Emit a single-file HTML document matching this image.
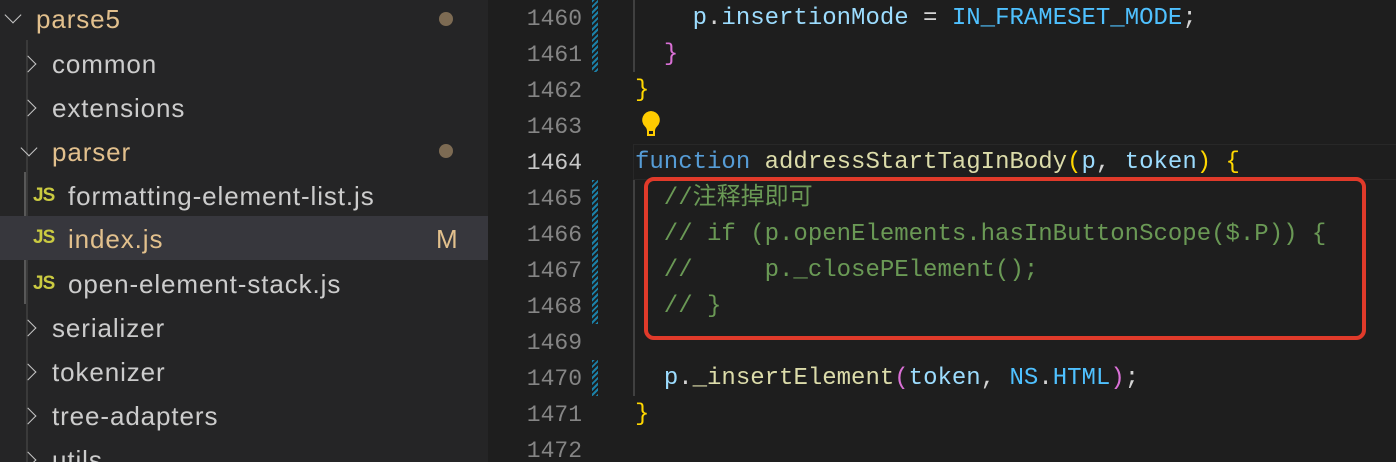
<!DOCTYPE html>
<html style="overflow:hidden"><head><meta charset="utf-8"><style>
html,body{margin:0;width:1396px;height:462px;overflow:hidden}
body{background:#1e1e1e;position:relative;font-family:"Liberation Sans",sans-serif}
#side{position:absolute;left:0;top:0;width:488px;height:462px;background:#252526;overflow:hidden}
.r{position:absolute;left:0;width:488px;height:44px;line-height:44px;font-size:26px;letter-spacing:0.9px;color:#cccccc;white-space:nowrap}
.r .t{position:absolute}
.chev{position:absolute;width:11px;height:11px;border-right:1.5px solid #c5c5c5;border-bottom:1.5px solid #c5c5c5}
.js{position:absolute;left:33px;font-size:19px;font-weight:bold;color:#cbcb41;letter-spacing:-1px}
.dot{position:absolute;left:439px;top:15px;width:14px;height:14px;border-radius:50%;background:#7d6b53}
#ed{position:absolute;left:488px;top:0;width:908px;height:462px;overflow:hidden}
.ln{position:absolute;left:0;width:94px;text-align:right;font-family:"Liberation Mono",monospace;font-size:23px;color:#858585;height:36px;line-height:38px}
.c{position:absolute;left:147px;font-family:"Liberation Mono","Noto Sans CJK SC",monospace;font-size:24px;height:36px;line-height:38px;white-space:pre;color:#d4d4d4}
.git{position:absolute;left:104px;width:6px;background:repeating-linear-gradient(135deg,#1b81a8 0 2px,transparent 2px 4px)}
.k{color:#569cd6}.f{color:#dcdcaa}.v{color:#9cdcfe}.y{color:#ffd700}.p{color:#da70d6}.cm{color:#6a9955}.cn{color:#4fc1ff}
</style></head><body>
<div id="side">
<div style="position:absolute;left:26px;top:40px;width:2px;height:422px;background:#3a3a3a"></div>
<div style="position:absolute;left:24px;top:172px;width:2px;height:132px;background:#585858"></div>
<div class="r" style="top:-3px"><div class="chev" style="left:7px;top:12px;transform:rotate(45deg)"></div><span class="t" style="left:36px;color:#e2c08d">parse5</span><div class="dot"></div></div>
<div class="r" style="top:42px"><div class="chev" style="left:22px;top:16px;transform:rotate(-45deg)"></div><span class="t" style="left:52px">common</span></div>
<div class="r" style="top:86px"><div class="chev" style="left:22px;top:16px;transform:rotate(-45deg)"></div><span class="t" style="left:52px">extensions</span></div>
<div class="r" style="top:130px"><div class="chev" style="left:23px;top:12px;transform:rotate(45deg)"></div><span class="t" style="left:52px;color:#e2c08d">parser</span><div class="dot" style="top:14px"></div></div>
<div class="r" style="top:174px"><span class="js">JS</span><span class="t" style="left:68px">formatting-element-list.js</span></div>
<div class="r" style="top:216px;background:#37373d"><span class="js">JS</span><span class="t" style="left:68px;color:#e2c08d;top:1px">index.js</span><span class="t" style="left:436px;color:#e2c08d;top:1px">M</span></div>
<div class="r" style="top:262px"><span class="js">JS</span><span class="t" style="left:68px">open-element-stack.js</span></div>
<div class="r" style="top:306px"><div class="chev" style="left:22px;top:16px;transform:rotate(-45deg)"></div><span class="t" style="left:52px">serializer</span></div>
<div class="r" style="top:350px"><div class="chev" style="left:22px;top:16px;transform:rotate(-45deg)"></div><span class="t" style="left:52px">tokenizer</span></div>
<div class="r" style="top:394px"><div class="chev" style="left:22px;top:16px;transform:rotate(-45deg)"></div><span class="t" style="left:52px">tree-adapters</span></div>
<div class="r" style="top:438px"><div class="chev" style="left:22px;top:16px;transform:rotate(-45deg)"></div><span class="t" style="left:52px">utils</span></div>
</div>
<div id="ed">
<div class="git" style="top:0;height:72px"></div>
<div class="git" style="top:180px;height:144px"></div>
<div class="git" style="top:360px;height:36px"></div>
<div style="position:absolute;left:145px;top:0;width:2px;height:72px;background:#404040"></div>
<div style="position:absolute;left:145px;top:180px;width:2px;height:216px;background:#404040"></div>
<div style="position:absolute;left:145px;top:144px;width:763px;height:34px;border:1px solid #282828;border-right:none"></div>
<div class="ln" style="top:0">1460</div><div class="ln" style="top:36px">1461</div><div class="ln" style="top:72px">1462</div><div class="ln" style="top:108px">1463</div><div class="ln" style="top:144px;color:#c6c6c6">1464</div><div class="ln" style="top:180px">1465</div><div class="ln" style="top:216px">1466</div><div class="ln" style="top:252px">1467</div><div class="ln" style="top:288px">1468</div><div class="ln" style="top:324px">1469</div><div class="ln" style="top:360px">1470</div><div class="ln" style="top:396px">1471</div><div class="ln" style="top:432px">1472</div>
<div class="c" style="top:0">    <span class="v">p</span>.<span class="v">insertionMode</span> = <span class="cn">IN_FRAMESET_MODE</span>;</div>
<div class="c" style="top:36px">  <span class="p">}</span></div>
<div class="c" style="top:72px"><span class="y">}</span></div>
<svg style="position:absolute;left:152px;top:110px" width="22" height="28" viewBox="0 0 22 28"><path d="M11 1a9 9 0 0 0-6 15.5c1.5 1.5 2 3 2 4.5h8c0-1.5.5-3 2-4.5A9 9 0 0 0 11 1z" fill="#ffcc00"/><rect x="7" y="21" width="8" height="5" fill="#ffcc00"/><rect x="9" y="21" width="4" height="3" fill="#1e1e1e"/></svg>
<div class="c" style="top:144px"><span class="k">function</span> <span class="f">addressStartTagInBody</span><span class="y">(</span><span class="v">p</span>, <span class="v">token</span><span class="y">)</span> <span class="y">{</span></div>
<div class="c cm" style="top:180px">  //注释掉即可</div>
<div class="c cm" style="top:216px">  // if (p.openElements.hasInButtonScope($.P)) {</div>
<div class="c cm" style="top:252px">  //     p._closePElement();</div>
<div class="c cm" style="top:288px">  // }</div>
<div class="c" style="top:360px">  <span class="v">p</span>.<span class="f">_insertElement</span><span class="p">(</span><span class="v">token</span>, <span class="cn">NS</span>.<span class="cn">HTML</span><span class="p">)</span>;</div>
<div class="c" style="top:396px"><span class="y">}</span></div>
<div style="position:absolute;left:156px;top:177px;width:714px;height:155px;border:4px solid #e03a2a;border-radius:10px"></div>
</div>
</body></html>
